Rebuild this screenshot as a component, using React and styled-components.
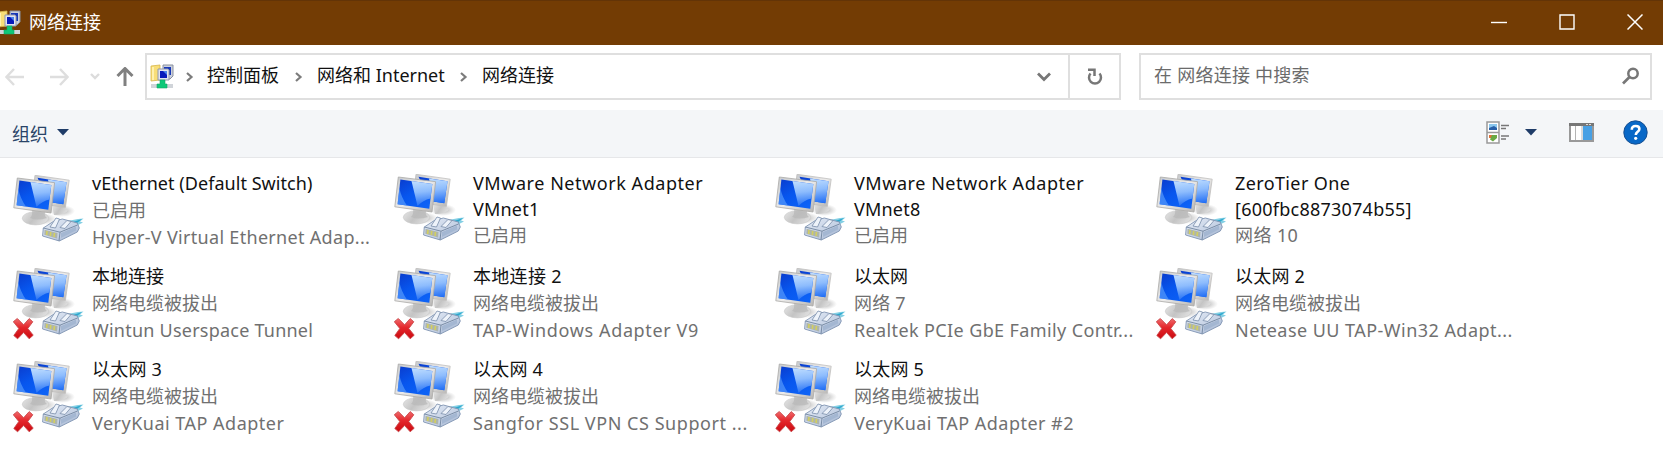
import React from 'react';
import styled, { createGlobalStyle } from 'styled-components';

const GlobalStyle = createGlobalStyle`
  * { box-sizing: border-box; }
  body { margin: 0; background: #fff; overflow: hidden; }
`;

const Window = styled.div`
  width: 1663px;
  height: 468px;
  display: flex;
  flex-direction: column;
  background: #fff;
  color: #111;
  font-family: 'Noto Sans', 'Noto Sans CJK SC', sans-serif;
  font-size: 18px;
  white-space: nowrap;
  svg { display: block; flex: none; }
`;

const TitleBar = styled.header`
  height: 45px;
  flex: none;
  display: flex;
  align-items: center;
  padding-bottom: 2px;
  background: #733c04;
  border-top: 1px solid #633407;
  color: #fff;
`;
const TitleText = styled.h1`
  flex: 1;
  margin: 0 0 0 8px;
  font-size: 18px;
  font-weight: 400;
  line-height: 42px;
`;
const CaptionButton = styled.button`
  width: 68px;
  height: 42px;
  padding: 0 0 0 12px;
  border: 0;
  background: none;
  display: grid;
  place-items: center;
`;

const NavBar = styled.nav`
  height: 65px;
  flex: none;
  display: flex;
  padding: 8px 11px 10px 5px;
`;
const NavButtons = styled.div`
  width: 140px;
  display: flex;
  align-items: center;
`;
const AddressBar = styled.div`
  width: 976px;
  height: 47px;
  display: flex;
  align-items: center;
  border: 2px solid #dfdfdf;
`;
const Crumbs = styled.div`
  flex: 1;
  display: flex;
  align-items: center;
  padding-left: 3px;
`;
const Crumb = styled.span`
  width: ${(p) => p.$w}px;
  line-height: 40px;
  margin-top: -3px;
`;
const CrumbArrow = styled.span`
  width: ${(p) => p.$w || 38}px;
  padding-left: ${(p) => p.$pad}px;
`;
const RefreshButton = styled.div`
  width: 51px;
  height: 43px;
  display: grid;
  place-items: center;
  border-left: 2px solid #dfdfdf;
`;
const SearchBox = styled.div`
  flex: 1;
  height: 47px;
  margin-left: 18px;
  padding: 0 10px 1px 13px;
  display: flex;
  align-items: center;
  justify-content: space-between;
  border: 2px solid #dfdfdf;
  color: #6b6b6b;
`;
const SearchHint = styled.span`
  line-height: 38px;
  margin-top: -2px;
  letter-spacing: 0.25px;
`;

const CommandBar = styled.div`
  height: 48px;
  flex: none;
  display: flex;
  align-items: center;
  justify-content: space-between;
  padding: 0 15px 2px 12px;
  background: #f4f6f8;
  border-bottom: 1px solid #e6e7e9;
`;
const OrganizeButton = styled.div`
  display: flex;
  align-items: center;
  gap: 9px;
  color: #294468;
`;
const Tools = styled.div`
  display: flex;
  align-items: center;
`;
const Gap = styled.span`
  width: ${(p) => p.$w}px;
`;

const Grid = styled.main`
  display: grid;
  grid-template-columns: repeat(4, 381px);
  grid-auto-rows: 93px;
  padding-top: 11px;
`;
const Item = styled.article`
  display: flex;
  padding-left: 13px;
`;
const IconSlot = styled.div`
  width: 79px;
  flex: none;
  padding-top: ${(p) => p.$top}px;
`;
const Lines = styled.div`
  padding-top: 1px;
`;
const Line = styled.div`
  height: ${(p) => p.$h}px;
  line-height: ${(p) => p.$h}px;
  color: ${(p) => (p.$title ? '#111' : '#707070')};
  letter-spacing: ${(p) => p.$ls || 0}px;
`;

function FolderNetIcon({ width = 24 }) {
  return (
    <svg width={width} height="25" viewBox={`${24 - width} 0 ${width} 25`}>
      <path d="M1 2 10 1v15L1 17Z" fill="#f8de78" stroke="#d7b64d" strokeWidth=".8" />
      <path d="M3 3v13" stroke="#fff1ae" strokeWidth="2" />
      <path d="M13 1h10v11l-3 3h-7Z" fill="#cbd0dd" stroke="#8a919f" />
      <path d="M14 3h7v8h-7Z" fill="#1838b8" />
      <path d="M8 5h10l1 1v10H8Z" fill="#e2e4f0" stroke="#9198aa" />
      <path d="M10 7h7v7h-7Z" fill="#0719bb" />
      <path d="m13 7 4 0v4Z" fill="#4b83ed" />
      <path d="M1 20h22v4H1Z" fill="#d0d4d9" />
      <path d="M10 16h5v4h2v4H7v-4h3Z" fill="#0dc878" stroke="#11a764" strokeWidth=".6" />
    </svg>
  );
}

function Stroke({ w, h, d, color, sw = 2 }) {
  return (
    <svg width={w} height={h} viewBox={`0 0 ${w} ${h}`} fill="none" stroke={color} strokeWidth={sw}>
      <path d={d} />
    </svg>
  );
}

const Caret = () => (
  <svg width="12" height="7" viewBox="0 0 12 7"><path d="M0 0h12L6 6.5Z" fill="#1f3c68" /></svg>
);

const DefsHolder = styled.svg`
  position: absolute;
`;

function AdapterDefs() {
  return (
    <DefsHolder width="0" height="0">
      <defs>
        <linearGradient id="screen" x1="0" y1="0" x2=".7" y2="1">
          <stop offset="0" stopColor="#0a3ccd" />
          <stop offset=".5" stopColor="#0756ee" />
          <stop offset="1" stopColor="#0d62f6" />
        </linearGradient>
        <linearGradient id="glare" x1=".3" y1="0" x2=".4" y2="1">
          <stop offset="0" stopColor="#bddcff" />
          <stop offset=".45" stopColor="#8dbcfd" />
          <stop offset="1" stopColor="#2470f5" />
        </linearGradient>
        <linearGradient id="frame" x1="0" y1="0" x2="1" y2="1">
          <stop offset="0" stopColor="#c6c9cc" />
          <stop offset=".5" stopColor="#ecebea" />
          <stop offset="1" stopColor="#b4b2b0" />
        </linearGradient>
        <linearGradient id="stand" x1="0" y1="0" x2="1" y2=".4">
          <stop offset="0" stopColor="#e6e6e6" />
          <stop offset=".55" stopColor="#c4c4c4" />
          <stop offset="1" stopColor="#dcdcdc" />
        </linearGradient>
        <radialGradient id="shade">
          <stop offset="0" stopColor="#777" stopOpacity=".65" />
          <stop offset="1" stopColor="#999" stopOpacity="0" />
        </radialGradient>
        <linearGradient id="plug" x1="0" y1="0" x2="1" y2="1">
          <stop offset="0" stopColor="#e6edf7" />
          <stop offset=".6" stopColor="#c4d0e4" />
          <stop offset="1" stopColor="#94a9c8" />
        </linearGradient>
        <linearGradient id="cross" x1="0" y1="0" x2="0" y2="1">
          <stop offset="0" stopColor="#f06a6c" />
          <stop offset=".45" stopColor="#e4262b" />
          <stop offset="1" stopColor="#cb0910" />
        </linearGradient>
      </defs>
    </DefsHolder>
  );
}

function AdapterIcon({ unplugged }) {
  return (
    <svg width="73" height="74" viewBox="0 0 73 74">
      <ellipse cx="49" cy="36" rx="13" ry="6" fill="url(#shade)" />
      <path d="M39 30h10q1 3 6 5-2 5-14 5Z" fill="url(#stand)" />
      <path d="M22 .3 56.200 5.200 52.400 32.500 36 30 21 8Z" fill="url(#frame)" stroke="#c0bfbe" strokeWidth=".8" />
      <path d="M24.500 2.700 53.500 7.200 50.300 29.300 36 27Z" fill="url(#screen)" />
      <path d="M35 4.400 53.500 7.200 50.300 29.300 39 27.500Z" fill="url(#glare)" />
      <ellipse cx="29" cy="44" rx="15" ry="6" fill="url(#shade)" />
      <ellipse cx="22.500" cy="43.300" rx="13.200" ry="6.600" fill="url(#stand)" stroke="#c9c9c9" strokeWidth=".6" />
      <path d="M19 35 32 37q-1 4 2 6-10 3-17 0 3-3 2-8Z" fill="#b8b8b8" opacity=".75" />
      <path d="M4.300 3 41.600 7.700 38 38 .8 32.800Z" fill="url(#frame)" stroke="#aaa8a6" strokeWidth=".8" />
      <path d="M6.400 5.600 38.300 9.900 35.300 34.700 3.600 30.300Z" fill="url(#screen)" />
      <path d="M17.500 7.100 38.300 9.900 36.500 24.500Q29 26 23.500 32Z" fill="url(#glare)" />
      <path d="M5.300 14Q7.500 24 13 31.600L3.600 30.300Z" fill="#5295fa" opacity=".75" />
      <path d="M52 49 57 45.500 65 44 70.500 43.500 67 46.500 70 47.500 61 52Z" fill="#83cfe4" />
      <path d="m57 48 12-4-5 4-6 3" fill="#2ba7cd" />
      <path d="m30.300 53 10-6.500 9-2.500 15 4 2 5-2 4-18 9-16.700-5Z" fill="url(#plug)" stroke="#8094b2" strokeWidth=".9" strokeLinejoin="round" />
      <path d="m30.300 53 16.700 4.200 17.500-7.200M47 57.200 46 66" fill="none" stroke="#72869f" strokeWidth=".9" />
      <path d="m37 52 6-9 3.500 1-4 9ZM47 52.500l7-7 4 1-6 7Z" fill="#eef3fa" stroke="#788da9" strokeWidth=".8" />
      <path d="m48 58 15-6.500v4L48 63Z" fill="#a4b7d2" />
      <path d="m31.500 54.700 13 3.400-.5 5.500-12.700-3.800Z" fill="#aeb5ac" />
      <path d="m34 56-.3 4m4-3-.3 4m4-3-.3 4" stroke="#d2cf62" strokeWidth="1.600" />
      {unplugged && (
        <path
          d="m4.300 50.500-4 3.200 5.500 6.800L.8 67.500l3.800 3.300 6-6.300 5.600 6.300 4-3.600-5.400-6.700 5-6.700-3.600-3.200-5.600 6.200Z"
          fill="url(#cross)" stroke="#c9484b" strokeWidth=".9" strokeLinejoin="round"
        />
      )}
    </svg>
  );
}

// Each text line is [text, letter spacing].
const UNPLUGGED = ['网络电缆被拔出', 0];
const adapters = [
  { title: [['vEthernet (Default Switch)', 0.05]], info: [['已启用', 0], ['Hyper-V Virtual Ethernet Adap...', 0.31]] },
  { title: [['VMware Network Adapter', 0.55], ['VMnet1', 0.2]], info: [['已启用', 0]] },
  { title: [['VMware Network Adapter', 0.55], ['VMnet8', 0.2]], info: [['已启用', 0]] },
  { title: [['ZeroTier One', 0.38], ['[600fbc8873074b55]', 0.24]], info: [['网络 10', 0.4]] },
  { title: [['本地连接', 0]], info: [UNPLUGGED, ['Wintun Userspace Tunnel', 0.23]], off: true },
  { title: [['本地连接 2', 0.3]], info: [UNPLUGGED, ['TAP-Windows Adapter V9', 0.63]], off: true },
  { title: [['以太网', 0]], info: [['网络 7', 0.2], ['Realtek PCIe GbE Family Contr...', 0.38]] },
  { title: [['以太网 2', 0.2]], info: [UNPLUGGED, ['Netease UU TAP-Win32 Adapt...', 0.46]], off: true },
  { title: [['以太网 3', 0.2]], info: [UNPLUGGED, ['VeryKuai TAP Adapter', 0.49]], off: true },
  { title: [['以太网 4', 0.2]], info: [UNPLUGGED, ['Sangfor SSL VPN CS Support ...', 0.55]], off: true },
  { title: [['以太网 5', 0.2]], info: [UNPLUGGED, ['VeryKuai TAP Adapter #2', 0.47]], off: true },
];

function Adapter({ title, info, off }) {
  const wrapped = title.length > 1;
  return (
    <Item>
      <IconSlot $top={wrapped ? 5 : 6}><AdapterIcon unplugged={off} /></IconSlot>
      <Lines>
        {title.map(([t, ls]) => <Line key={t} $title $ls={ls} $h={wrapped ? 26 : 27}>{t}</Line>)}
        {info.map(([t, ls]) => <Line key={t} $ls={ls} $h={27}>{t}</Line>)}
      </Lines>
    </Item>
  );
}

export default function App() {
  return (
    <Window>
      <GlobalStyle />
      <AdapterDefs />
      <TitleBar>
        <FolderNetIcon width={21} />
        <TitleText>网络连接</TitleText>
        <CaptionButton><Stroke w={16} h={16} d="M0 8.500h16" color="#fff" sw={1.4} /></CaptionButton>
        <CaptionButton><Stroke w={16} h={16} d="M1 1h14v14H1Z" color="#fff" sw={1.4} /></CaptionButton>
        <CaptionButton><Stroke w={16} h={16} d="m.5.5 15 15m0-15-15 15" color="#fff" sw={1.5} /></CaptionButton>
      </TitleBar>
      <NavBar>
        <NavButtons>
          <Stroke w={19} h={18} d="M19 9H2m7-8L1.500 9 9 17" color="#dedede" sw={2.4} />
          <Gap $w={26} />
          <Stroke w={19} h={18} d="M0 9h17m-7-8 7.500 8-7.500 8" color="#dedede" sw={2.4} />
          <Gap $w={21} />
          <Stroke w={10} h={7} d="m1 1 4 4 4-4" color="#dcdcdc" sw={2.4} />
          <Gap $w={16} />
          <Stroke w={18} h={19} d="M9 19V2M1.500 9 9 1.500 16.500 9" color="#808080" sw={3} />
        </NavButtons>
        <AddressBar>
          <Crumbs>
            <FolderNetIcon />
            <CrumbArrow $w={33} $pad={12}><Stroke w={8} h={10} d="m1 1 4.500 4L1 9" color="#7c7c7c" sw={2.2} /></CrumbArrow>
            <Crumb $w={72}>控制面板</Crumb>
            <CrumbArrow $pad={16}><Stroke w={8} h={10} d="m1 1 4.500 4L1 9" color="#7c7c7c" sw={2.2} /></CrumbArrow>
            <Crumb $w={127}>网络和 Internet</Crumb>
            <CrumbArrow $pad={16}><Stroke w={8} h={10} d="m1 1 4.500 4L1 9" color="#7c7c7c" sw={2.2} /></CrumbArrow>
            <Crumb $w={72}>网络连接</Crumb>
          </Crumbs>
          <Stroke w={14} h={10} d="m1 1.500 6 6 6-6" color="#777" sw={2.8} />
          <Gap $w={17} />
          <RefreshButton>
            <svg width="16" height="18" viewBox="0 0 16 18" fill="none" stroke="#777" strokeWidth="2.500">
              <path d="M3.500 5.500A6 6 0 1 0 12.500 5.500M1 1.800h6.500v6.200" />
            </svg>
          </RefreshButton>
        </AddressBar>
        <SearchBox>
          <SearchHint>在 网络连接 中搜索</SearchHint>
          <svg width="18" height="18" viewBox="0 0 18 18" fill="none" stroke="#777">
            <circle cx="11" cy="6.500" r="4.700" strokeWidth="2.500" />
            <path d="m7.500 10-6.500 6.500" strokeWidth="2.700" />
          </svg>
        </SearchBox>
      </NavBar>
      <CommandBar>
        <OrganizeButton>组织<Caret /></OrganizeButton>
        <Tools>
          <svg width="24" height="23" viewBox="0 0 24 23">
            <path d="M1 1h12v10.500H1Zm0 10.500h12V22H1Z" fill="#fff" stroke="#999" strokeWidth="1.500" />
            <path d="M3 3h8v6H3Z" fill="#8bc8ef" /><path d="M3 7 8 5l3 2v2H3Z" fill="#285fa8" />
            <path d="M3 14h4v3H3Z" fill="#e07036" /><path d="M6 14h5v3l-4 3.500-3-2Z" fill="#69a944" />
            <path d="M15 4.500h8M15 7.500h5M15 15h8M15 18h5" stroke="#777" strokeWidth="1.500" />
          </svg>
          <Gap $w={15} />
          <Caret />
          <Gap $w={32} />
          <svg width="25" height="19" viewBox="0 0 25 19">
            <path d="M1 1h23v17H1Z" fill="#fff" stroke="#999" strokeWidth="2" />
            <path d="M0 1.500h25" stroke="#777" strokeWidth="3" />
            <path d="M6.500 3v14M13 3v14" stroke="#b4b4b4" />
            <path d="M14 3h9v14h-9Z" fill="#48a0e4" />
            <path d="M17 1.500h2m1 0h2" stroke="#ddd" />
          </svg>
          <Gap $w={29} />
          <svg width="25" height="25" viewBox="0 0 25 25">
            <circle cx="12.500" cy="12.500" r="11.700" fill="#0868c7" stroke="#174f91" />
            <path d="M8.800 9.700q0-3.700 3.900-3.700 3.700 0 3.700 3.100 0 1.700-2.100 3.100-1.500 1-1.500 2.700" fill="none" stroke="#fff" strokeWidth="2.600" />
            <circle cx="12.700" cy="18.300" r="1.600" fill="#fff" />
          </svg>
        </Tools>
      </CommandBar>
      <Grid>
        {adapters.map((a, i) => <Adapter key={i} {...a} />)}
      </Grid>
    </Window>
  );
}
